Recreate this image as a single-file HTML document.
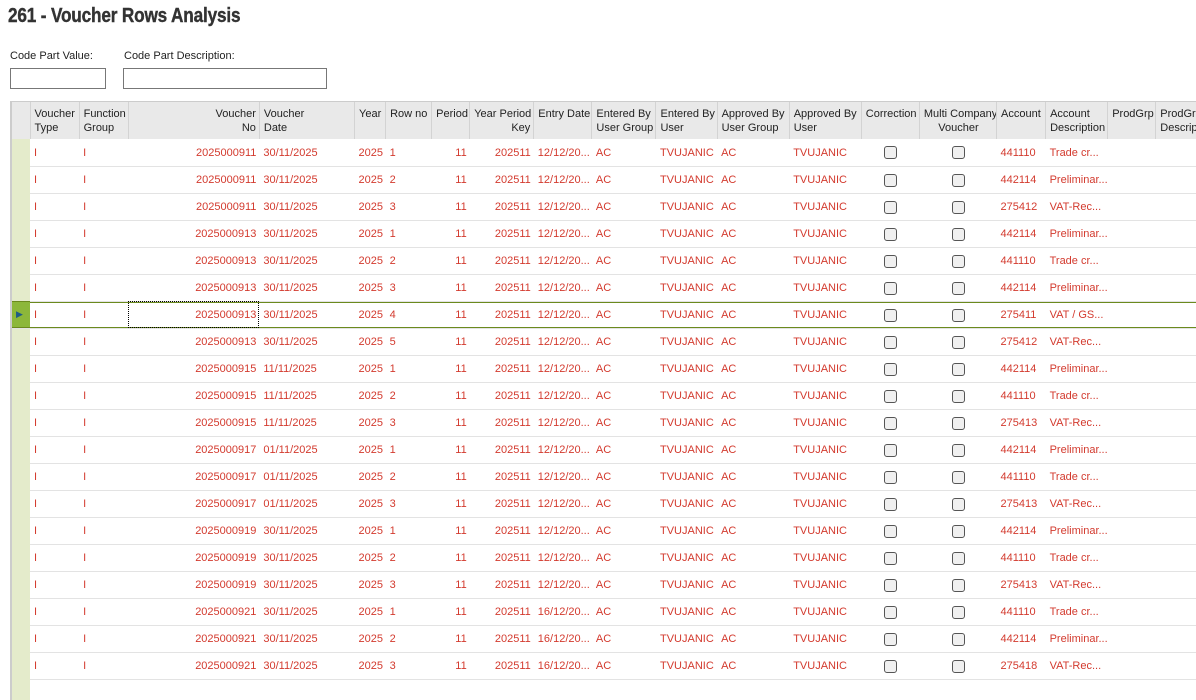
<!DOCTYPE html>
<html><head><meta charset="utf-8"><style>
*{box-sizing:border-box;margin:0;padding:0}
html,body{width:1196px;height:700px;overflow:hidden}
body{background:#fff;font-family:"Liberation Sans",Tahoma,sans-serif;font-size:11px;color:#333;position:relative}
h1{position:absolute;left:8px;top:5px;font-size:20px;font-weight:bold;color:#333;letter-spacing:-0.2px;font-family:"Liberation Sans",sans-serif;transform:scaleX(0.86);transform-origin:left;-webkit-text-stroke:0.4px #333}
.lbl{position:absolute;top:50px;font-size:11px;color:#222}
.inp{position:absolute;top:68px;height:21px;border:1px solid #777;background:#fff}
.grid{position:absolute;left:10px;top:101px;width:1186px;height:599px;overflow:hidden;border-left:2px solid #ccc;border-top:1px solid #ccc}
.gbg{position:absolute;left:0;top:37px;width:18px;height:600px;background:#e4ebcb}
table{position:absolute;left:0;top:0;border-collapse:collapse;table-layout:fixed;width:1204px}
th{background:#e9e9e9;font-weight:normal;text-align:left;vertical-align:top;padding:5px 3px 0 4px;height:37px;line-height:14px;border-left:1px solid #d3d3d3;color:#222;white-space:nowrap;overflow:hidden}
th:first-child{border-left:none}
td{height:27px;padding:1px 3px 0 4px;color:#d33a2e;border-bottom:1px solid #e3e3e3;white-space:nowrap;overflow:hidden}
td:first-child{background:#e4ebcb;border-bottom:none}
.r{text-align:right}.c{text-align:center}
.cb{display:inline-block;width:13px;height:13px;border:1px solid #555;border-radius:3px;background:#f0f0f0;vertical-align:middle}
tr.sel td{box-shadow:inset 0 1px 0 #6b8a1e,inset 0 -1px 0 #6b8a1e;border-bottom:1px solid #e3e3e3}
tr.sel td:first-child{background:#8cb73a;color:#1f5c86;font-size:9px}
.foc{outline:1px dotted #000;outline-offset:-1px}
</style></head><body>
<h1>261 - Voucher Rows Analysis</h1>
<div class="lbl" style="left:10px">Code Part Value:</div>
<div class="lbl" style="left:124px">Code Part Description:</div>
<div class="inp" style="left:10px;width:96px"></div>
<div class="inp" style="left:123px;width:204px"></div>
<div class="grid"><div class="gbg"></div>
<table>
<colgroup><col style="width:18px"><col style="width:49px"><col style="width:49px"><col style="width:131px"><col style="width:95px"><col style="width:31px"><col style="width:46px"><col style="width:38px"><col style="width:64px"><col style="width:58px"><col style="width:64px"><col style="width:61px"><col style="width:72px"><col style="width:72px"><col style="width:58px"><col style="width:77px"><col style="width:49px"><col style="width:62px"><col style="width:48px"><col style="width:60px"></colgroup>
<tr><th></th><th>Voucher<br>Type</th><th>Function<br>Group</th><th class="r">Voucher<br>No</th><th>Voucher<br>Date</th><th>Year</th><th>Row no</th><th>Period</th><th class="r">Year Period<br>Key</th><th>Entry Date</th><th>Entered By<br>User Group</th><th>Entered By<br>User</th><th>Approved By<br>User Group</th><th>Approved By<br>User</th><th>Correction</th><th class="c">Multi Company<br>Voucher</th><th>Account</th><th>Account<br>Description</th><th>ProdGrp</th><th>ProdGrp<br>Descript</th></tr>
<tr><td></td><td>I</td><td>I</td><td class="r">2025000911</td><td>30/11/2025</td><td class="r">2025</td><td>1</td><td class="r">11</td><td class="r">202511</td><td>12/12/20...</td><td>AC</td><td>TVUJANIC</td><td>AC</td><td>TVUJANIC</td><td class="c"><span class="cb"></span></td><td class="c"><span class="cb"></span></td><td>441110</td><td>Trade cr...</td><td></td><td></td></tr>
<tr><td></td><td>I</td><td>I</td><td class="r">2025000911</td><td>30/11/2025</td><td class="r">2025</td><td>2</td><td class="r">11</td><td class="r">202511</td><td>12/12/20...</td><td>AC</td><td>TVUJANIC</td><td>AC</td><td>TVUJANIC</td><td class="c"><span class="cb"></span></td><td class="c"><span class="cb"></span></td><td>442114</td><td>Preliminar...</td><td></td><td></td></tr>
<tr><td></td><td>I</td><td>I</td><td class="r">2025000911</td><td>30/11/2025</td><td class="r">2025</td><td>3</td><td class="r">11</td><td class="r">202511</td><td>12/12/20...</td><td>AC</td><td>TVUJANIC</td><td>AC</td><td>TVUJANIC</td><td class="c"><span class="cb"></span></td><td class="c"><span class="cb"></span></td><td>275412</td><td>VAT-Rec...</td><td></td><td></td></tr>
<tr><td></td><td>I</td><td>I</td><td class="r">2025000913</td><td>30/11/2025</td><td class="r">2025</td><td>1</td><td class="r">11</td><td class="r">202511</td><td>12/12/20...</td><td>AC</td><td>TVUJANIC</td><td>AC</td><td>TVUJANIC</td><td class="c"><span class="cb"></span></td><td class="c"><span class="cb"></span></td><td>442114</td><td>Preliminar...</td><td></td><td></td></tr>
<tr><td></td><td>I</td><td>I</td><td class="r">2025000913</td><td>30/11/2025</td><td class="r">2025</td><td>2</td><td class="r">11</td><td class="r">202511</td><td>12/12/20...</td><td>AC</td><td>TVUJANIC</td><td>AC</td><td>TVUJANIC</td><td class="c"><span class="cb"></span></td><td class="c"><span class="cb"></span></td><td>441110</td><td>Trade cr...</td><td></td><td></td></tr>
<tr><td></td><td>I</td><td>I</td><td class="r">2025000913</td><td>30/11/2025</td><td class="r">2025</td><td>3</td><td class="r">11</td><td class="r">202511</td><td>12/12/20...</td><td>AC</td><td>TVUJANIC</td><td>AC</td><td>TVUJANIC</td><td class="c"><span class="cb"></span></td><td class="c"><span class="cb"></span></td><td>442114</td><td>Preliminar...</td><td></td><td></td></tr>
<tr class="sel"><td>&#9654;</td><td>I</td><td>I</td><td class="r foc">2025000913</td><td>30/11/2025</td><td class="r">2025</td><td>4</td><td class="r">11</td><td class="r">202511</td><td>12/12/20...</td><td>AC</td><td>TVUJANIC</td><td>AC</td><td>TVUJANIC</td><td class="c"><span class="cb"></span></td><td class="c"><span class="cb"></span></td><td>275411</td><td>VAT / GS...</td><td></td><td></td></tr>
<tr><td></td><td>I</td><td>I</td><td class="r">2025000913</td><td>30/11/2025</td><td class="r">2025</td><td>5</td><td class="r">11</td><td class="r">202511</td><td>12/12/20...</td><td>AC</td><td>TVUJANIC</td><td>AC</td><td>TVUJANIC</td><td class="c"><span class="cb"></span></td><td class="c"><span class="cb"></span></td><td>275412</td><td>VAT-Rec...</td><td></td><td></td></tr>
<tr><td></td><td>I</td><td>I</td><td class="r">2025000915</td><td>11/11/2025</td><td class="r">2025</td><td>1</td><td class="r">11</td><td class="r">202511</td><td>12/12/20...</td><td>AC</td><td>TVUJANIC</td><td>AC</td><td>TVUJANIC</td><td class="c"><span class="cb"></span></td><td class="c"><span class="cb"></span></td><td>442114</td><td>Preliminar...</td><td></td><td></td></tr>
<tr><td></td><td>I</td><td>I</td><td class="r">2025000915</td><td>11/11/2025</td><td class="r">2025</td><td>2</td><td class="r">11</td><td class="r">202511</td><td>12/12/20...</td><td>AC</td><td>TVUJANIC</td><td>AC</td><td>TVUJANIC</td><td class="c"><span class="cb"></span></td><td class="c"><span class="cb"></span></td><td>441110</td><td>Trade cr...</td><td></td><td></td></tr>
<tr><td></td><td>I</td><td>I</td><td class="r">2025000915</td><td>11/11/2025</td><td class="r">2025</td><td>3</td><td class="r">11</td><td class="r">202511</td><td>12/12/20...</td><td>AC</td><td>TVUJANIC</td><td>AC</td><td>TVUJANIC</td><td class="c"><span class="cb"></span></td><td class="c"><span class="cb"></span></td><td>275413</td><td>VAT-Rec...</td><td></td><td></td></tr>
<tr><td></td><td>I</td><td>I</td><td class="r">2025000917</td><td>01/11/2025</td><td class="r">2025</td><td>1</td><td class="r">11</td><td class="r">202511</td><td>12/12/20...</td><td>AC</td><td>TVUJANIC</td><td>AC</td><td>TVUJANIC</td><td class="c"><span class="cb"></span></td><td class="c"><span class="cb"></span></td><td>442114</td><td>Preliminar...</td><td></td><td></td></tr>
<tr><td></td><td>I</td><td>I</td><td class="r">2025000917</td><td>01/11/2025</td><td class="r">2025</td><td>2</td><td class="r">11</td><td class="r">202511</td><td>12/12/20...</td><td>AC</td><td>TVUJANIC</td><td>AC</td><td>TVUJANIC</td><td class="c"><span class="cb"></span></td><td class="c"><span class="cb"></span></td><td>441110</td><td>Trade cr...</td><td></td><td></td></tr>
<tr><td></td><td>I</td><td>I</td><td class="r">2025000917</td><td>01/11/2025</td><td class="r">2025</td><td>3</td><td class="r">11</td><td class="r">202511</td><td>12/12/20...</td><td>AC</td><td>TVUJANIC</td><td>AC</td><td>TVUJANIC</td><td class="c"><span class="cb"></span></td><td class="c"><span class="cb"></span></td><td>275413</td><td>VAT-Rec...</td><td></td><td></td></tr>
<tr><td></td><td>I</td><td>I</td><td class="r">2025000919</td><td>30/11/2025</td><td class="r">2025</td><td>1</td><td class="r">11</td><td class="r">202511</td><td>12/12/20...</td><td>AC</td><td>TVUJANIC</td><td>AC</td><td>TVUJANIC</td><td class="c"><span class="cb"></span></td><td class="c"><span class="cb"></span></td><td>442114</td><td>Preliminar...</td><td></td><td></td></tr>
<tr><td></td><td>I</td><td>I</td><td class="r">2025000919</td><td>30/11/2025</td><td class="r">2025</td><td>2</td><td class="r">11</td><td class="r">202511</td><td>12/12/20...</td><td>AC</td><td>TVUJANIC</td><td>AC</td><td>TVUJANIC</td><td class="c"><span class="cb"></span></td><td class="c"><span class="cb"></span></td><td>441110</td><td>Trade cr...</td><td></td><td></td></tr>
<tr><td></td><td>I</td><td>I</td><td class="r">2025000919</td><td>30/11/2025</td><td class="r">2025</td><td>3</td><td class="r">11</td><td class="r">202511</td><td>12/12/20...</td><td>AC</td><td>TVUJANIC</td><td>AC</td><td>TVUJANIC</td><td class="c"><span class="cb"></span></td><td class="c"><span class="cb"></span></td><td>275413</td><td>VAT-Rec...</td><td></td><td></td></tr>
<tr><td></td><td>I</td><td>I</td><td class="r">2025000921</td><td>30/11/2025</td><td class="r">2025</td><td>1</td><td class="r">11</td><td class="r">202511</td><td>16/12/20...</td><td>AC</td><td>TVUJANIC</td><td>AC</td><td>TVUJANIC</td><td class="c"><span class="cb"></span></td><td class="c"><span class="cb"></span></td><td>441110</td><td>Trade cr...</td><td></td><td></td></tr>
<tr><td></td><td>I</td><td>I</td><td class="r">2025000921</td><td>30/11/2025</td><td class="r">2025</td><td>2</td><td class="r">11</td><td class="r">202511</td><td>16/12/20...</td><td>AC</td><td>TVUJANIC</td><td>AC</td><td>TVUJANIC</td><td class="c"><span class="cb"></span></td><td class="c"><span class="cb"></span></td><td>442114</td><td>Preliminar...</td><td></td><td></td></tr>
<tr><td></td><td>I</td><td>I</td><td class="r">2025000921</td><td>30/11/2025</td><td class="r">2025</td><td>3</td><td class="r">11</td><td class="r">202511</td><td>16/12/20...</td><td>AC</td><td>TVUJANIC</td><td>AC</td><td>TVUJANIC</td><td class="c"><span class="cb"></span></td><td class="c"><span class="cb"></span></td><td>275418</td><td>VAT-Rec...</td><td></td><td></td></tr>
</table></div>
</body></html>
